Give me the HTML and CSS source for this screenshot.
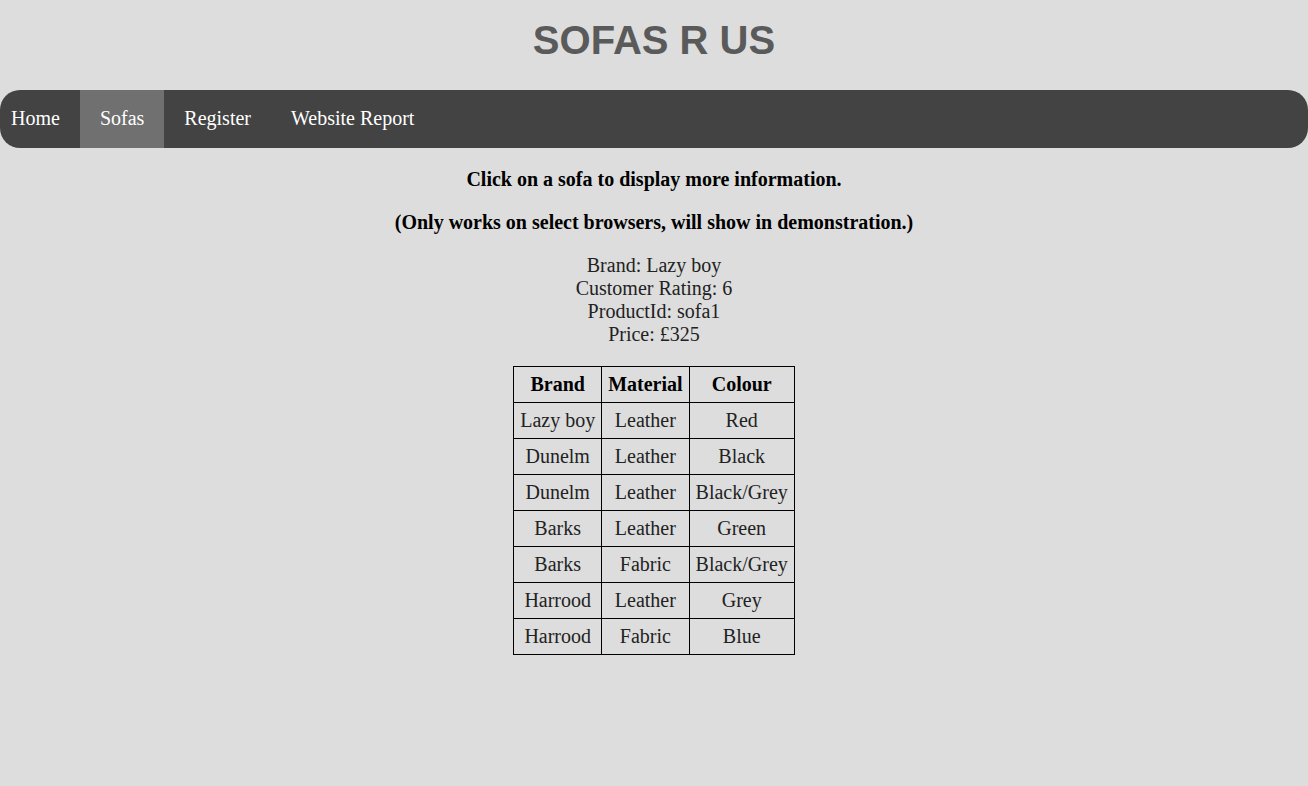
FILE: index.html
```html
<!DOCTYPE html>
<html lang="en">
<head>
<meta charset="utf-8">
<title>Sofas R Us</title>
<link rel="stylesheet" href="styles.css">
</head>
<body>
<header class="site-header">
  <h1 class="site-title">SOFAS R US</h1>
</header>
<nav class="main-nav">
  <ul class="nav-list">
    <li><a class="nav-link first" href="#">Home</a></li>
    <li><a class="nav-link active" href="#">Sofas</a></li>
    <li><a class="nav-link" href="#">Register</a></li>
    <li><a class="nav-link" href="#">Website Report</a></li>
  </ul>
</nav>
<main class="content">
  <p class="note">Click on a sofa to display more information.</p>
  <p class="note">(Only works on select browsers, will show in demonstration.)</p>
  <div class="info">
    <div>Brand: Lazy boy</div>
    <div>Customer Rating: 6</div>
    <div>ProductId: sofa1</div>
    <div>Price: £325</div>
  </div>
  <table class="sofa-table">
    <thead>
      <tr><th>Brand</th><th>Material</th><th>Colour</th></tr>
    </thead>
    <tbody>
      <tr><td>Lazy boy</td><td>Leather</td><td>Red</td></tr>
      <tr><td>Dunelm</td><td>Leather</td><td>Black</td></tr>
      <tr><td>Dunelm</td><td>Leather</td><td>Black/Grey</td></tr>
      <tr><td>Barks</td><td>Leather</td><td>Green</td></tr>
      <tr><td>Barks</td><td>Fabric</td><td>Black/Grey</td></tr>
      <tr><td>Harrood</td><td>Leather</td><td>Grey</td></tr>
      <tr><td>Harrood</td><td>Fabric</td><td>Blue</td></tr>
    </tbody>
  </table>
</main>
</body>
</html>
```

FILE: styles.css
```css
html, body {
  margin: 0;
  padding: 0;
  background: #dddddd;
}

body {
  font-family: "Liberation Serif", "Times New Roman", serif;
  font-size: 20px;
  color: #222222;
}

.site-header {
  text-align: center;
}

.site-title {
  margin: 17px 0 27px;
  font-family: "Liberation Sans", Arial, sans-serif;
  font-size: 40px;
  font-weight: bold;
  line-height: 46px;
  color: #5a5a5a;
}

.main-nav {
  background: #434343;
  border-radius: 20px;
  overflow: hidden;
}

.nav-list {
  list-style: none;
  margin: 0;
  padding: 0;
  display: flex;
}

.nav-link {
  display: block;
  padding: 17px 20px 18px;
  line-height: 23px;
  color: #ffffff;
  text-decoration: none;
}

.nav-link.first {
  padding-left: 11px;
}

.nav-link.active {
  background: #707070;
}

.content {
  display: flex;
  flex-direction: column;
  align-items: center;
  text-align: center;
}

.note {
  margin: 20px 0 0;
  font-weight: bold;
  line-height: 23px;
  color: #000000;
}

.info {
  margin-top: 20px;
  line-height: 23px;
}

.sofa-table {
  margin-top: 20px;
  border-collapse: collapse;
}

.sofa-table th,
.sofa-table td {
  border: 1px solid #000000;
  padding: 6px;
  line-height: 23px;
  text-align: center;
}

.sofa-table th {
  color: #000000;
}
```
